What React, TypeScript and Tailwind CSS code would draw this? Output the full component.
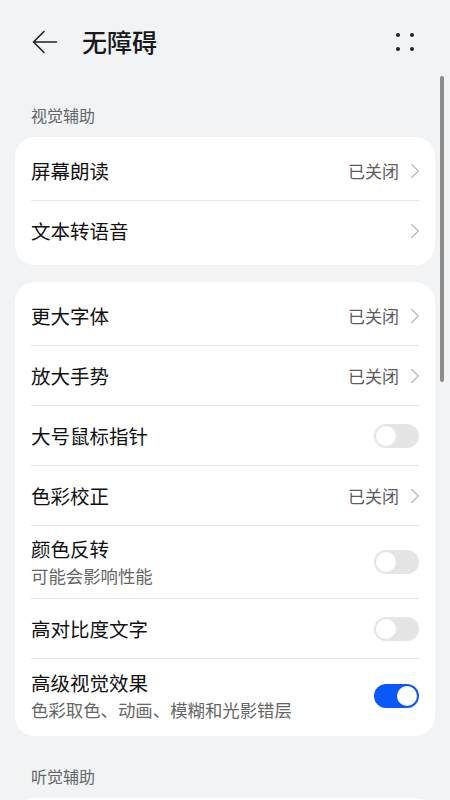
import { ChevronRight } from "lucide-react";

type Row = {
  title: string;
  sub?: string;
  value?: string;
  kind: "link" | "toggle";
  on?: boolean;
};

const visual1: Row[] = [
  { title: "屏幕朗读", value: "已关闭", kind: "link" },
  { title: "文本转语音", kind: "link" },
];

const visual2: Row[] = [
  { title: "更大字体", value: "已关闭", kind: "link" },
  { title: "放大手势", value: "已关闭", kind: "link" },
  { title: "大号鼠标指针", kind: "toggle" },
  { title: "色彩校正", value: "已关闭", kind: "link" },
  { title: "颜色反转", sub: "可能会影响性能", kind: "toggle" },
  { title: "高对比度文字", kind: "toggle" },
  { title: "高级视觉效果", sub: "色彩取色、动画、模糊和光影错层", kind: "toggle", on: true },
];

function Toggle({ on }: { on?: boolean }) {
  return (
    <div
      className={`w-[45px] h-[24px] rounded-full flex items-center px-[2px] ${
        on ? "bg-[#0a59f7] justify-end" : "bg-[#e5e5e5] justify-start"
      }`}
    >
      <div className="w-[20px] h-[20px] rounded-full bg-white" />
    </div>
  );
}

function SettingRow({ row, last }: { row: Row; last: boolean }) {
  return (
    <div className="px-[16px]">
      <div
        className={`flex items-center justify-between ${
          row.sub ? "h-[73px]" : "h-[60px]"
        } ${last ? "" : "border-b border-[#e6e7e9]"}`}
      >
        <div className="flex flex-col">
          <span className="text-[19.5px] leading-[26px] text-[#111]">
            {row.title}
          </span>
          {row.sub && (
            <span className="text-[17.4px] leading-[24px] mt-[2px] text-[#666]">
              {row.sub}
            </span>
          )}
        </div>
        {row.kind === "toggle" ? (
          <Toggle on={row.on} />
        ) : (
          <div className="flex items-center gap-[3px]">
            {row.value && (
              <span className="text-[17px] text-[#5c5c5c]">{row.value}</span>
            )}
            <ChevronRight
              size={26}
              strokeWidth={1.1}
              className="text-[#b8b8b8] -mr-[9px]"
            />
          </div>
        )}
      </div>
    </div>
  );
}

function Card({ rows }: { rows: Row[] }) {
  return (
    <div className="mx-[15px] bg-white rounded-[20px] py-[4px]">
      {rows.map((r, i) => (
        <SettingRow key={r.title} row={r} last={i === rows.length - 1} />
      ))}
    </div>
  );
}

export default function App() {
  return (
    <div
      className="relative w-[450px] h-[800px] overflow-hidden bg-[#f1f3f5]"
      style={{ fontFamily: '"Noto Sans CJK SC", "Noto Sans", sans-serif' }}
    >
      <header className="flex items-center justify-between h-[84px] pl-[32px] pr-[36px]">
        <div className="flex items-center gap-[24px]">
          <svg width="26" height="24" viewBox="0 0 26 24" fill="none" stroke="#222" strokeWidth="1.6" strokeLinecap="round" strokeLinejoin="round">
            <path d="M12 1.5 L1.5 12 L12 22.5 M1.5 12 H24.5" />
          </svg>
          <h1 className="text-[25px] font-medium text-[#191919]">无障碍</h1>
        </div>
        <div className="grid grid-cols-2 gap-x-[10px] gap-y-[10px]">
          <span className="w-[4px] h-[4px] rounded-full bg-[#222]" />
          <span className="w-[4px] h-[4px] rounded-full bg-[#222]" />
          <span className="w-[4px] h-[4px] rounded-full bg-[#222]" />
          <span className="w-[4px] h-[4px] rounded-full bg-[#222]" />
        </div>
      </header>

      <div className="px-[31px] pt-[19px] pb-[10px] text-[16px] leading-[24px] text-[#666]">视觉辅助</div>
      <Card rows={visual1} />
      <div className="h-[17px]" />
      <Card rows={visual2} />

      <div className="px-[31px] pt-[28px] pb-[10px] text-[16px] leading-[24px] text-[#666]">听觉辅助</div>
      <div className="mx-[15px] bg-white rounded-t-[20px] h-[60px]" />

      <div className="absolute right-[6px] top-[76px] w-[4px] h-[306px] rounded-full bg-[#8c8c8c]" />
    </div>
  );
}
